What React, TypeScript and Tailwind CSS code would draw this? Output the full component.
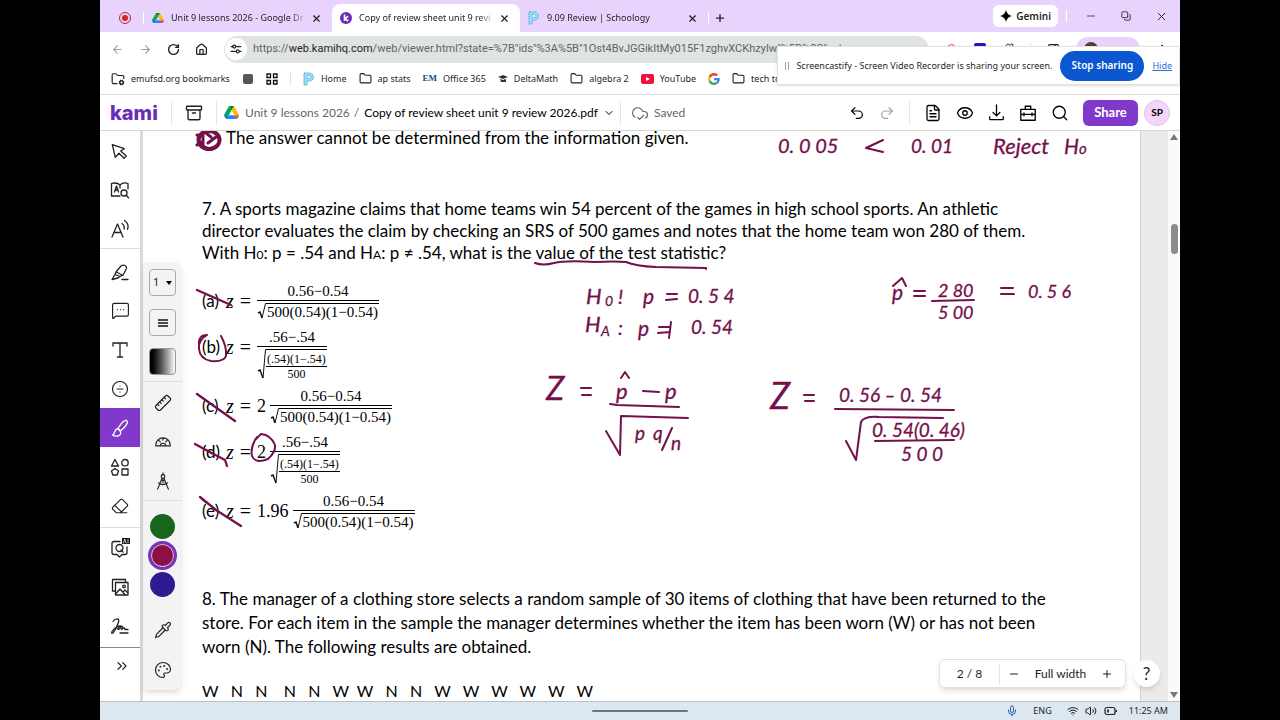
import type { ReactNode } from "react";
import {
  Archive, ArrowLeft, ArrowRight, ChevronDown, ChevronsRight, CircleDivide, CloudCheck,
  Copy, EllipsisVertical, Eraser, Eye, FileText, Folder, FolderCog, House, MessageSquareMore, Mic,
  Minus, PanelRight, Palette, Pipette, Plus, Puzzle, Redo2, RotateCw, Ruler, Search, Undo2,
  Volume2, Wifi, X,
} from "lucide-react";

const INK = "#74104a";

function DriveLogo({ className }: { className: string }) {
  return (
    <svg viewBox="0 0 87 78" className={className} aria-hidden="true">
      <path d="M7 67l4 6c1 2 2 3 3 4l14-24H0c0 2 0 3 1 5z" fill="#0066da" />
      <path d="M44 25L30 1c-1 1-3 2-3 3L1 49c-1 1-1 3-1 4h28z" fill="#00ac47" />
      <path d="M74 77c1-1 2-2 3-4l10-15c0-2 0-3 0-5H60l6 12z" fill="#ea4335" />
      <path d="M44 25L58 1c-2-1-3-1-5-1H35c-2 0-4 0-5 1z" fill="#00832d" />
      <path d="M60 53H28L14 77c1 1 3 1 5 1h50c2 0 3 0 5-1z" fill="#2684fc" />
      <path d="M73 27L60 4c-1-1-1-2-2-3L44 25l16 28h27c0-1 0-3-1-4z" fill="#ffba00" />
    </svg>
  );
}

function SchoolLogo() {
  return (
    <svg viewBox="0 0 12 14" className="h-[14px] w-3 shrink-0" aria-hidden="true">
      <path d="M1 1h5.500a4 4 0 0 1 0 8H4v4H1z" fill="#a5dcf4" stroke="#3fb4e5" strokeWidth="1" strokeDasharray="2 .6" />
      <path d="M4 3.500h2.500a1.500 1.500 0 0 1 0 3H4z" fill="#e6f6fd" stroke="#3fb4e5" strokeWidth=".7" />
    </svg>
  );
}

function KamiBadge() {
  return (
    <svg viewBox="0 0 12 12" className="size-3 shrink-0" aria-hidden="true">
      <circle cx="6" cy="6" r="6" fill="#6a2cb8" />
      <path d="M4.500 2.500v6.500M8 4.300L5 6.600 8.200 9" stroke="#fff" strokeWidth="1.600" fill="none" />
    </svg>
  );
}

function GoogleLogo() {
  return (
    <svg viewBox="0 0 48 48" className="size-3" aria-hidden="true">
      <path fill="#ea4335" d="M24 9.500c3.500 0 6.700 1.200 9.200 3.600l6.900-6.900C35.900 2.400 30.500 0 24 0 14.600 0 6.500 5.400 2.600 13.200l8 6.200C12.400 13.700 17.700 9.500 24 9.500z" />
      <path fill="#4285f4" d="M47 24.600c0-1.600-.2-3.100-.4-4.600H24v9h12.900c-.6 3-2.200 5.500-4.700 7.200l7.700 6C44.400 38 47 31.800 47 24.600z" />
      <path fill="#fbbc05" d="M10.500 28.600a14.500 14.500 0 0 1 0-9.200l-8-6.200a24 24 0 0 0 0 21.600z" />
      <path fill="#34a853" d="M24 48c6.500 0 11.900-2.100 15.900-5.800l-7.700-6c-2.200 1.500-4.900 2.300-8.200 2.300-6.300 0-11.600-4.200-13.500-9.900l-8 6.200C6.500 42.600 14.600 48 24 48z" />
    </svg>
  );
}

function Line({ children, size = "size-5" }: { children: ReactNode; size?: string }) {
  return (
    <svg viewBox="0 0 20 20" className={size} fill="none" stroke="currentColor" strokeWidth="1.300" strokeLinecap="round" strokeLinejoin="round" aria-hidden="true">
      {children}
    </svg>
  );
}

function Tab({ icon, title, active = false }: { icon: ReactNode; title: string; active?: boolean }) {
  return (
    <div className={active ? "flex w-[188px] items-center rounded-t-lg bg-white pl-2 pr-[10px]" : "flex w-[188px] items-center pl-2 pr-[10px]"}>
      <button className="flex min-w-0 flex-1 items-center gap-[7px]">
        {icon}
        <span className="w-[136px] whitespace-nowrap [mask-image:linear-gradient(90deg,#000_88%,transparent)] text-left">{title}</span>
      </button>
      <button aria-label={"Close " + title}><X className="size-[11px]" strokeWidth={2.500} /></button>
    </div>
  );
}

function Bookmark({ icon, label }: { icon: ReactNode; label: string }) {
  return (
    <a href="#" className="flex items-center gap-[6px] whitespace-nowrap">
      {icon}
      <span>{label}</span>
    </a>
  );
}

function Tool({ label, children, active = false }: { label: string; children: ReactNode; active?: boolean }) {
  return (
    <button aria-label={label} className={active ? "flex h-[39px] w-full items-center justify-center bg-[#8139cc] text-white" : "flex h-[39px] w-full items-center justify-center"}>
      {children}
    </button>
  );
}

function Radical({ complex = false }: { complex?: boolean }) {
  return complex ? (
    <svg viewBox="0 0 9 32" className="h-8 w-[9px] shrink-0" fill="none" stroke="#111" strokeWidth="1" aria-hidden="true">
      <path d="M1 22l2-1 3 8" strokeWidth="1.500" /><path d="M6 29L8.500 .5H9" />
    </svg>
  ) : (
    <svg viewBox="0 0 9 18" className="h-[18px] w-[9px] shrink-0" fill="none" stroke="#111" strokeWidth="1" aria-hidden="true">
      <path d="M1 10l2-1 2 6" strokeWidth="1.500" /><path d="M5 15L8.500 .5H9" />
    </svg>
  );
}

function Option({ letter, factor, complex = false }: { letter: string; factor?: string; complex?: boolean }) {
  return (
    <li className={complex ? "flex h-[59px] items-start" : "flex h-[46px] items-start"}>
      <span className="mt-2 w-6 leading-[22px]">({letter})</span>
      <span className="mt-2 flex gap-[6px] font-['Liberation_Serif',serif] text-[20px] leading-[22px]">
        <i>z</i>
        <span>=</span>
        {factor && <span className="text-[18px]">{factor}</span>}
      </span>
      <span className={factor ? "ml-1 flex flex-col items-center font-['Liberation_Serif',serif] text-[15px]" : "ml-[6px] flex flex-col items-center font-['Liberation_Serif',serif] text-[15px]"}>
        <span className="h-[18px] leading-[18px]">{complex ? ".56−.54" : "0.56−0.54"}</span>
        <span className="flex border-t border-black pt-[2px]">
          <Radical complex={complex} />
          {complex ? (
            <span className="flex flex-col items-center border-t border-black pt-px text-[12px]">
              <span className="mt-px border-b border-black px-px leading-[14px]">(.54)(1−.54)</span>
              <span className="leading-[14px]">500</span>
            </span>
          ) : (
            <span className="border-t border-black px-px leading-[17px]">500(0.54)(1−0.54)</span>
          )}
        </span>
      </span>
    </li>
  );
}

function Ink({ x, y, size = 19, children }: { x: number; y: number; size?: number; children: string }) {
  return <text x={x} y={y} fontSize={size}>{children}</text>;
}

function Annotations() {
  return (
    <svg className="pointer-events-none absolute inset-0 size-full" aria-label="Handwritten notes">
      <g transform="translate(-143 -131)" fill={INK} stroke={INK} strokeWidth=".3" className="font-['Lato',sans-serif] italic">
        <Ink x={778} y={153} size={20}>0. 0 05</Ink>
        <Ink x={911} y={153}>0. 01</Ink>
        <Ink x={993} y={154} size={22}>Reject</Ink>
        <Ink x={1064} y={154} size={21}>H</Ink>
        <Ink x={1079} y={154} size={15}>o</Ink>
        <Ink x={586} y={304} size={22}>H</Ink>
        <Ink x={605} y={306} size={14}>0</Ink>
        <Ink x={618} y={304} size={20}>!</Ink>
        <Ink x={643} y={304} size={21}>p</Ink>
        <Ink x={688} y={303}>0. 5 4</Ink>
        <Ink x={585} y={332} size={22}>H</Ink>
        <Ink x={601} y={336} size={14}>A</Ink>
        <Ink x={618} y={335} size={20}>:</Ink>
        <Ink x={638} y={336} size={21}>p</Ink>
        <Ink x={691} y={334}>0. 54</Ink>
        <Ink x={546} y={400} size={33}>Z</Ink>
        <Ink x={616} y={399} size={22}>p</Ink>
        <Ink x={665} y={399} size={22}>p</Ink>
        <Ink x={635} y={440}>p</Ink>
        <Ink x={653} y={440}>q</Ink>
        <Ink x={671} y={450}>n</Ink>
        <Ink x={892} y={300} size={21}>p</Ink>
        <Ink x={938} y={297} size={18}>2 80</Ink>
        <Ink x={938} y={319} size={18}>5 00</Ink>
        <Ink x={1028} y={298} size={18}>0. 5 6</Ink>
        <Ink x={770} y={409} size={36}>Z</Ink>
        <Ink x={839} y={402}>0. 56 – 0. 54</Ink>
        <Ink x={872} y={437}>0. 54(0. 46)</Ink>
        <Ink x={901} y={461}>5 0 0</Ink>
      </g>
      <g transform="translate(-143 -131)" stroke={INK} strokeWidth="2" strokeLinecap="round" strokeLinejoin="round" fill="none">
        <path d="M883 140l-17 8 17 4M535 263q8 3 19 0t41 -1q20-1 31 0q9 4 30 5l50 1v1" />
        <path d="M667 294h10M666 300l11-1M659 327h11M658 333l12-1M671 322l-2 16" />
        <path d="M581 388h10M582 395h9M914 291h11M914 296h11M1001 288h12M1001 294h13M804 395h10M805 401h9" />
        <path d="M893 286l9-8 4 8M621 378l4-6 4 6M643 391l16 1" />
        <path d="M610 404l7 1 62 2M606 431l14 24 1-39 67 2M672 428l-10 22" />
        <path d="M932 301l42-1M835 409l119 1M846 441l10 19 5-38q3-6 18-5l64 1M875 441l79-1" />
        <path d="M197 290l34 15M197 394l38 27M195 444q16 9 30 16l2 6M200 497l16 13 25 16M202 499l4 3" strokeWidth="2.300" />
        <path d="M207 335q-9 5-8 14 1 10 12 12 13 1 15-5 1-9-5-20M207 335q-9 0-8 10" />
        <path d="M257 437q-7 10-5 19 3 8 16 3 8-7 7-14-4-10-14-11l-6 6" />
        <ellipse cx="209" cy="140" rx="10.500" ry="9" strokeWidth="4" />
        <path d="M197 135l5 1M197 145l4-3M203 134v12l5 3M206 133l5 4M216 137l-8 6" strokeWidth="3" />
      </g>
    </svg>
  );
}

export default function App() {
  return (
    <div className="flex h-screen min-h-[600px] flex-col overflow-hidden bg-black px-[100px] font-['Noto_Sans',sans-serif] text-[9px] text-[#1f1f1f]">
      <div className="relative flex min-h-0 flex-1 flex-col bg-white">
        <header className="shrink-0">
          <div className="flex h-8 items-stretch bg-[#e8d3fd] pt-1">
            <div className="flex w-[44px] items-center pl-[19px]">
              <span className="flex size-[12px] items-center justify-center rounded-full border border-[#c5221f]"><span className="size-[6px] rounded-full bg-[#d32626]" /></span>
              <span className="ml-3 h-3 w-px bg-white" />
            </div>
            <Tab icon={<DriveLogo className="w-3 shrink-0" />} title="Unit 9 lessons 2026 - Google Dr" />
            <Tab active icon={<KamiBadge />} title="Copy of review sheet unit 9 revi" />
            <Tab icon={<SchoolLogo />} title="9.09 Review | Schoology" />
            <div className="flex items-center">
              <span className="h-3 w-px bg-white" />
              <button aria-label="New tab" className="ml-[5px]"><Plus className="size-3" strokeWidth={2.500} /></button>
            </div>
            <div className="ml-auto flex items-center pb-1">
              <button className="flex h-[22px] items-center gap-1 rounded-md bg-white px-[7px] text-[10px] font-semibold">
                <svg viewBox="0 0 12 12" className="size-3" aria-hidden="true"><path d="M6 0q1 5 6 6-5 1-6 6-1-5-6-6 5-1 6-6z" /></svg>
                Gemini
              </button>
              <span className="ml-2 h-3 w-px bg-white" />
              <button aria-label="Minimize" className="ml-[18px]"><Minus className="size-3" strokeWidth={1.500} /></button>
              <button aria-label="Restore" className="ml-6"><Copy className="size-[10px] rotate-90 scale-x-[-1]" /></button>
              <button aria-label="Close window" className="ml-6 mr-3"><X className="size-[13px]" strokeWidth={1.700} /></button>
            </div>
          </div>

          <div className="flex h-[34px] items-center pl-[11px] pr-3">
            <div className="flex w-[113px] shrink-0 items-center gap-[15px]">
              <button aria-label="Back" className="text-gray-400"><ArrowLeft className="size-[13px]" /></button>
              <button aria-label="Forward" className="text-gray-400"><ArrowRight className="size-[13px]" /></button>
              <button aria-label="Reload"><RotateCw className="size-[13px]" strokeWidth={2.500} /></button>
              <button aria-label="Home page"><House className="size-[13px]" strokeWidth={2.300} /></button>
            </div>
            <div className="flex h-[27px] min-w-0 flex-1 items-center gap-[6px] rounded-full bg-[#dfe3e1] pl-px">
              <button aria-label="Site information" className="flex size-[22px] shrink-0 items-center justify-center rounded-full bg-white">
                <Line size="size-3"><path d="M2 6h3M11 6h7M2 14h7M16 14h2" strokeWidth="2" /><circle cx="7" cy="6" r="2.500" strokeWidth="2" /><circle cx="13" cy="14" r="2.500" strokeWidth="2" /></Line>
              </button>
              <div className="overflow-hidden whitespace-nowrap font-['Roboto',sans-serif] text-[11px] text-[#5f6563]">https://<span className="text-[#1f1f1f]">web.kamihq.com</span>/web/viewer.html?state=%7B"ids"%3A%5B"1Ost4BvJGGikItMy015F1zghvXCKhzyIw"%5D%2C"act</div>
            </div>
            <div className="flex items-center gap-4 pl-[17px]">
              <Search className="size-3 text-pink-500" />
              <span className="size-3 rounded-xs bg-[#2419b5]" />
              <Puzzle className="size-3" />
              <span className="h-3 w-px bg-purple-200" />
              <PanelRight className="size-[13px]" />
              <span className="flex h-6 w-16 items-center rounded-full bg-[#e8d3fd] pl-2"><span className="size-[14px] rounded-full bg-[#5b3b34]" /></span>
              <EllipsisVertical className="size-3" />
            </div>
          </div>

          <nav aria-label="Bookmarks" className="flex h-[29px] items-center gap-3 overflow-hidden border-b border-[#dcdcdc] pl-[11px] pb-[3px]">
            <Bookmark icon={<FolderCog className="size-[14px]" />} label="emufsd.org bookmarks" />
            <a href="#" aria-label="Bookmark" className="flex w-3 justify-center"><span className="size-[10px] rounded-xs bg-[#525a58]" /></a>
            <a href="#" aria-label="Apps"><svg viewBox="0 0 12 12" className="size-3" fill="none" stroke="#111" strokeWidth="1.300"><path d="M1 1h3.500v3.500H1zM7.500 1H11v3.500H7.500zM1 7.500h3.500V11H1zM7.500 7.500H11V11H7.500z" /></svg></a>
            <span className="h-3 w-px bg-purple-200" />
            <Bookmark icon={<SchoolLogo />} label="Home" />
            <Bookmark icon={<Folder className="size-[13px]" />} label="ap stats" />
            <Bookmark icon={<b className="font-['Liberation_Serif',serif] text-[9px] text-[#154a86]" aria-hidden="true">EM</b>} label="Office 365" />
            <Bookmark icon={<svg viewBox="0 0 10 8" className="w-[10px]" aria-hidden="true"><path d="M0 2l5-2 5 2-5 2zM2 4l3 1 3-1v3H3z" fill="#2c3440" /></svg>} label="DeltaMath" />
            <Bookmark icon={<Folder className="size-[13px]" />} label="algebra 2" />
            <Bookmark icon={<svg viewBox="0 0 13 10" className="w-[13px]" aria-hidden="true"><rect width="13" height="10" rx="2" fill="#f0123b" /><path d="M5 3l4 2-4 2z" fill="#fff" /></svg>} label="YouTube" />
            <a href="#" aria-label="Google"><GoogleLogo /></a>
            <Bookmark icon={<Folder className="size-[13px]" />} label="tech tools" />
          </nav>
        </header>

        <div role="status" className="absolute right-0 top-[46px] z-20 flex h-[39px] items-center border border-[#e2e2e2] bg-white px-[7px] shadow-sm">
          <span className="h-2 w-1 border-x border-gray-400" />
          <span className="ml-[7px] whitespace-nowrap">Screencastify - Screen Video Recorder is sharing your screen.</span>
          <button className="ml-2 h-[30px] w-[84px] rounded-full bg-[#0b57d0] text-[10px] font-semibold text-white">Stop sharing</button>
          <a href="#" className="ml-2 text-[#2a6dd0] underline">Hide</a>
        </div>

        <div className="flex h-9 shrink-0 items-center border-b border-[#d6d6d6] px-[10px] font-['Lato',sans-serif] text-[12px]">
          <span className="w-[61px] font-['Inter',sans-serif] text-[20px] font-extrabold leading-none text-[#6a2cb8]">kami</span>
          <span className="h-6 w-px bg-[#e5e5e5]" />
          <button aria-label="My files" className="mx-[13px]"><Archive className="size-[18px]" strokeWidth={1.800} /></button>
          <span className="h-6 w-px bg-[#e5e5e5]" />
          <a href="#" className="ml-[7px] flex items-center gap-[6px] whitespace-nowrap text-[#666]"><DriveLogo className="w-[15px]" />Unit 9 lessons 2026</a>
          <span className="ml-1 text-[#666]">/</span>
          <button className="ml-[5px] flex items-center gap-[5px] whitespace-nowrap text-black">Copy of review sheet unit 9 review 2026.pdf <ChevronDown className="size-3" /></button>
          <span className="ml-[5px] h-6 w-px bg-[#e5e5e5]" />
          <span className="ml-[10px] flex items-center gap-[5px] text-[#666]"><CloudCheck className="size-[18px]" strokeWidth={1.500} />Saved</span>
          <div className="ml-auto flex items-center gap-[14px] text-black">
            <button aria-label="Undo"><Undo2 className="size-4" strokeWidth={1.800} /></button>
            <button aria-label="Redo" className="text-gray-400"><Redo2 className="size-4" strokeWidth={1.800} /></button>
            <span className="h-6 w-px bg-[#e5e5e5]" />
            <button aria-label="Document"><FileText className="size-[18px]" strokeWidth={1.700} /></button>
            <button aria-label="View"><Eye className="size-[18px]" strokeWidth={1.700} /></button>
            <button aria-label="Download"><Line size="size-[17px]"><path d="M10 1v13M6 10l4 4 4-4M2 15v2.500q0 1 1 1h14q1 0 1-1V15" strokeWidth="1.500" /></Line></button>
            <button aria-label="Toolbox"><Line size="size-[18px]"><path d="M2 6h16v12H2zM2 11.500h16M7 6V2.500h6V6M5.500 10v3M14.500 10v3" strokeWidth="1.500" /></Line></button>
            <button aria-label="Search"><Search className="size-[18px]" strokeWidth={1.700} /></button>
            <button className="h-[26px] w-[55px] rounded-md bg-[#8139cc] text-[13px] font-bold text-white">Share</button>
            <button className="-ml-2 flex size-[26px] items-center justify-center rounded-full border border-[#e3bdec] bg-[#f5d5fa] text-[10px] font-bold">SP</button>
          </div>
        </div>

        <div className="flex min-h-0 flex-1">
          <aside aria-label="Tools" className="w-[43px] shrink-0 border-r-[3px] border-[#d9d9d9] text-[#222]">
            <div className="border-b border-[#ddd]">
              <Tool label="Select"><Line><path d="M2.300 3.700l12 4-3.600 2.300 5.600 5-2.300 2.300-5-5-3.700 4z" /></Line></Tool>
              <Tool label="Dictionary"><Line><path d="M10 16H1.500V3.500C5 2.500 8 3 10 5c2-2 5-2.500 8-1.500V9M10 5v3M4.500 12l2-6 2 6M5.200 10h2.600" /><circle cx="14" cy="13" r="3" /><path d="M16.200 15.200l2.300 2.600" /></Line></Tool>
              <Tool label="Read aloud"><Line><path d="M2 18L7.500 5 13 18M4 13.500h7M12 4.500q3 2 2 5.500M14.500 1.500q5 3.500 3 9" /></Line></Tool>
            </div>
            <div className="border-b border-[#ddd] pb-[2px] pt-[3px]">
              <Tool label="Markup"><Line><path d="M6 10l5-6q2-1.500 4-.5 2 1 1.500 3L13 13l-3 1.500L5 12.500zM5 12.500l-3 5 6-1.500 2-1.500M12 17.500h6M6.500 10l6.500 3.500" /></Line></Tool>
              <Tool label="Comment"><MessageSquareMore className="size-[19px]" strokeWidth={1.500} /></Tool>
              <Tool label="Text box"><Line><path d="M3 6V3h14v3M10 3v14M7.500 17h5" /></Line></Tool>
              <Tool label="Equation"><CircleDivide className="size-[18px]" strokeWidth={1.600} /></Tool>
              <Tool label="Drawing" active><Line><path d="M8 10.500Q13 2 16.500 2.500q2.500 1.500-1.500 6-3 3.500-5 4.500z" /><path d="M8 10.500l2.500 2.500q1 4.500-3 5-3 .5-5-1 2-.5 2-3 1-3 3.500-3.500z" /></Line></Tool>
              <Tool label="Shapes"><Line><path d="M5 2.500L8.500 9h-7zM12 12h6v6h-6zM5 11.500l3.500 2.500-1.300 4H2.800L1.500 14z" /><circle cx="15" cy="5.700" r="3.200" /></Line></Tool>
              <Tool label="Eraser"><Eraser className="size-[18px]" strokeWidth={1.600} /></Tool>
            </div>
            <div className="border-b border-[#888] pb-[2px]">
              <Tool label="AI question"><Line><path d="M10 3.500H4Q2 3.500 2 5.500v9q0 2 2 2h3l2.500 2.500 2.500-2.500h3q2 0 2-2V9" /><circle cx="9.500" cy="10" r="3.500" /><path d="M11 12l2 2" /><rect x="12" y="0" width="8" height="6" fill="#111" stroke="none" /><path d="M13.500 5l1.200-4L16 5M18 1.300V5" stroke="#fff" strokeWidth=".8" /></Line></Tool>
              <Tool label="Media"><Line><path d="M5 14H2.500V2.500h13V5" /><rect x="5.500" y="5.500" width="12.500" height="12.500" /><path d="M6 16.500l4-4.500 5 5.500M13 15l2-2 2.500 2.500" /><circle cx="14" cy="9.500" r="1.300" /></Line></Tool>
              <Tool label="Signature"><Line><path d="M3 5.500Q5 2.500 8 3q1.500 1 0 4.500-2 6-5 9.500-2 1-1-1.500 2-3.500 5.500-5 3.500-1.500 3.500.5-1 2.500-2.500 2.500t0-2q2-1.500 4-1 .500 1-1 3 1.500-1.500 3-1.500l.5 1.500H18M10 17h8" /></Line></Tool>
            </div>
            <button aria-label="Expand" className="flex h-9 w-full items-center justify-center pl-1"><ChevronsRight className="size-4" strokeWidth={1.800} /></button>
          </aside>

          <main className="relative min-w-0 flex-1 overflow-hidden bg-white pl-[59px] font-['Lato',sans-serif] text-[17px] text-black">
            <p className="pl-6 leading-[14px]">The answer cannot be determined from the information given.</p>
            <p className="mt-[53px] whitespace-nowrap leading-[22px]">
              7. A sports magazine claims that home teams win 54 percent of the games in high school sports. An athletic<br />
              director evaluates the claim by checking an SRS of 500 games and notes that the home team won 280 of them.<br />
              With H<span className="text-[12px]">0</span>: p = .54 and H<span className="text-[12px]">A</span>: p ≠ .54, what is the value of the test statistic?
            </p>
            <ul className="mt-4">
              <Option letter="a" />
              <Option letter="b" complex />
              <Option letter="c" factor="2" />
              <Option letter="d" factor="2" complex />
              <Option letter="e" factor="1.96" />
            </ul>
            <p className="mt-[49px] whitespace-nowrap leading-[24px]">
              8. The manager of a clothing store selects a random sample of 30 items of clothing that have been returned to the<br />
              store. For each item in the sample the manager determines whether the item has been worn (W) or has not been<br />
              worn (N). The following results are obtained.
            </p>
            <p className="mt-5 whitespace-pre text-[16px] leading-[24px]">W   N   N    N   N   W  W   N   N   W   W   W   W   W   W</p>
            <Annotations />
          </main>

          <div className="flex w-10 shrink-0 justify-end border-l border-[#d5d5d5] bg-[#ebebeb]">
            <div className="flex w-3 flex-col items-center justify-between bg-[#fafafa] py-[3px]" aria-hidden="true">
              <svg viewBox="0 0 8 6" className="w-2"><path d="M4 0l4 6H0z" fill="#777" /></svg>
              <span className="mb-[355px] h-[30px] w-[7px] rounded-full bg-[#8b8b8b]" />
              <svg viewBox="0 0 8 6" className="w-2"><path d="M4 6L0 0h8z" fill="#777" /></svg>
            </div>
          </div>
        </div>

        <div aria-label="Drawing options" className="absolute left-[43px] top-[262px] flex h-[428px] w-[39px] flex-col items-center rounded-r-lg bg-[#f3f3f3] pt-[7px] text-[#222] shadow-md">
          <button aria-label="Stroke size" className="flex h-[27px] w-[27px] items-center justify-between rounded-sm border border-[#aaa] px-[3px] text-[11px]">1<svg viewBox="0 0 6 4" className="w-[6px]"><path d="M0 0h6L3 4z" /></svg></button>
          <button aria-label="Line style" className="mt-[13px] flex size-[27px] items-center justify-center rounded-sm border border-[#aaa]"><svg viewBox="0 0 10 8" className="w-[10px]" stroke="#111" strokeWidth="1.500"><path d="M0 1h10M0 4h10M0 7h10" /></svg></button>
          <button aria-label="Opacity" className="mt-3 size-[27px] rounded-sm border border-[#999] bg-linear-to-r from-black to-white" />
          <span className="mt-[6px] h-px w-full bg-[#ddd]" />
          <button aria-label="Ruler" className="mt-3"><Ruler className="size-[18px] scale-x-[-1]" strokeWidth={1.600} /></button>
          <button aria-label="Protractor" className="mt-5"><Line size="size-[18px]"><path d="M2 15.500v-1a8 8 0 0 1 16 0v1zM7 15.500a3 3 0 0 1 6 0M10 6.500V9M5 9l2 2M15 9l-2 2" /></Line></button>
          <button aria-label="Compass" className="mt-[22px]"><Line size="size-[18px]"><circle cx="10" cy="5" r="2" /><path d="M10 1v2M9 7L4 19M11 7l5 12M5 12q5 4 10 0M8 9h4M10 9v3" /></Line></button>
          <span className="mt-[10px] h-px w-full bg-[#ddd]" />
          <button aria-label="Green" className="mt-[13px] size-[25px] shrink-0 rounded-full bg-[#19651d]" />
          <button aria-label="Maroon" className="mt-[2px] size-[29px] shrink-0 rounded-full border-[3px] border-[#7735bd] bg-[#8c0f45] ring-1 ring-inset ring-[#d3b6df]" />
          <button aria-label="Blue" className="mt-[2px] size-[25px] shrink-0 rounded-full bg-[#2d1c91]" />
          <button aria-label="Pick color" className="mt-6"><Pipette className="size-[18px]" strokeWidth={1.600} /></button>
          <button aria-label="Palette" className="mt-[22px]"><Palette className="size-[18px]" strokeWidth={1.600} /></button>
        </div>

        <div className="absolute bottom-8 right-5 flex items-center gap-[7px] font-['Lato',sans-serif] text-[12px]">
          <div className="flex h-[29px] w-[187px] items-center rounded-md border border-[#e2e2e2] bg-white shadow-md">
            <span className="w-[60px] border-r border-[#e5e5e5] text-center leading-5">2 / 8</span>
            <button aria-label="Zoom out" className="ml-2"><Minus className="size-3" /></button>
            <button className="mx-auto">Full width</button>
            <button aria-label="Zoom in" className="mr-3"><Plus className="size-3" /></button>
          </div>
          <button aria-label="Help" className="size-[27px] rounded-full bg-white text-[17px] shadow-md">?</button>
        </div>

        <footer className="relative flex h-[19px] shrink-0 items-center justify-end border-t border-[#b8c2c8] bg-[#dce7ef] pr-3">
          <span className="absolute inset-x-0 mx-auto h-[2px] w-[96px] rounded bg-[#6c767f]" />
          <Mic className="size-3 text-[#2763a6]" />
          <span className="ml-[15px]">ENG</span>
          <Wifi className="ml-[15px] size-3" />
          <Volume2 className="ml-[6px] size-3" />
          <svg viewBox="0 0 13 10" className="ml-[7px] w-[13px]" fill="none" stroke="#222" strokeWidth="1.200" aria-hidden="true"><rect x="1" y="1.500" width="10" height="7" rx="2" /><path d="M12.500 4v2M4 3.500v3" strokeWidth="1.700" /></svg>
          <time className="ml-3">11:25 AM</time>
        </footer>
      </div>
    </div>
  );
}
